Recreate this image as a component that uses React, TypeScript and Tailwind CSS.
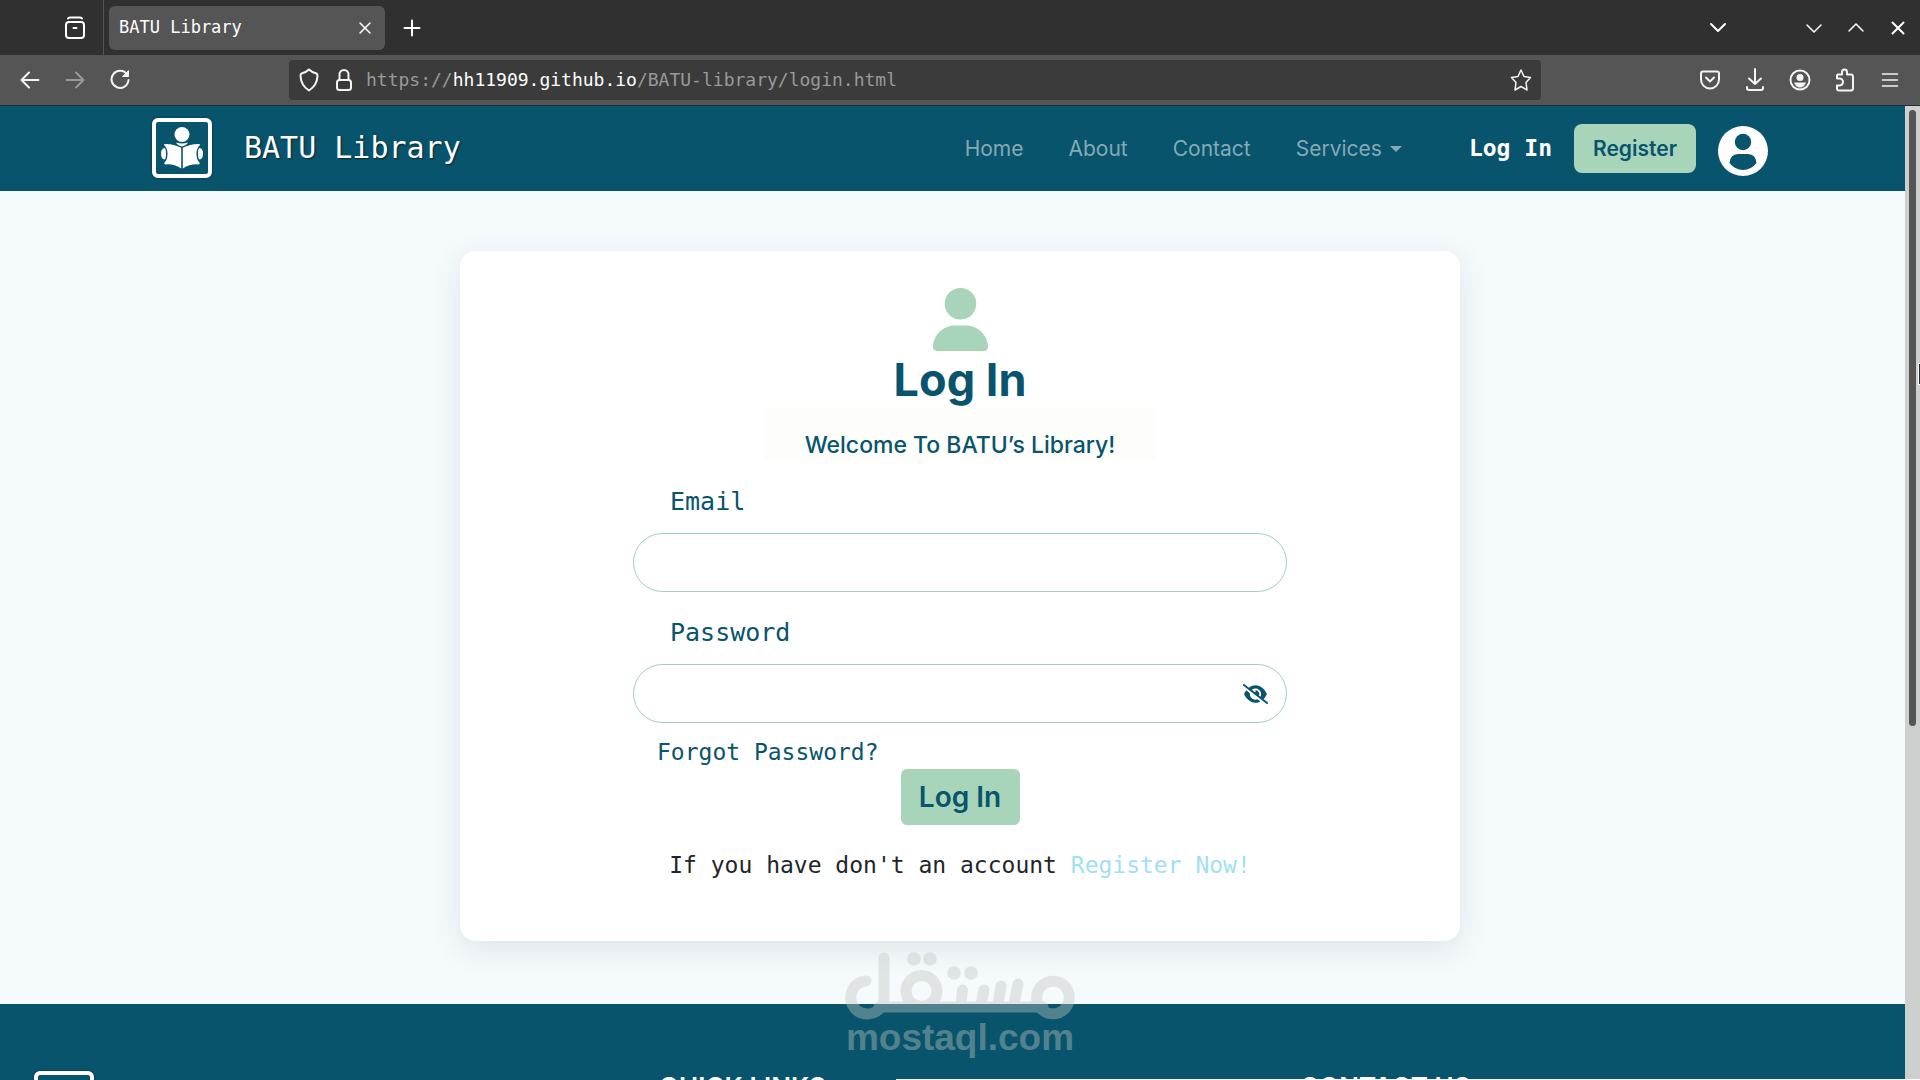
import React, { useState } from 'react';
import { FaEye, FaEyeSlash, FaUser } from 'react-icons/fa6';

const stroke = {
    fill: 'none',
    stroke: 'currentColor',
    strokeLinecap: 'round' as const,
    strokeLinejoin: 'round' as const,
};

interface IconButtonProps {
    label: string;
    className?: string;
    width?: number;
    children: React.ReactNode;
}

const IconButton: React.FC<IconButtonProps> = ({ label, className = '', width = 1.5, children }) => (
    <button type="button" aria-label={label} className={`flex size-6 shrink-0 items-center justify-center ${className}`}>
        <svg viewBox="0 0 24 24" className="size-6" {...stroke} strokeWidth={width}>
            {children}
        </svg>
    </button>
);

const TabBar: React.FC = () => (
    <div className="flex h-[55px] items-center bg-[#303030] pr-2.5 text-white">
        <div className="flex h-full w-[104px] items-center justify-end border-r border-[#555] pr-4">
            <IconButton label="Recent browsing" width={2}>
                <path d="M5 2.5 Q5.5 1.5 7 1.5 H17 Q18.5 1.5 19 2.5" />
                <rect x="3" y="6" width="18" height="16" rx="3" />
                <path d="M10.5 12 H13.5" />
            </IconButton>
        </div>
        <div className="ml-[5px] flex h-11 w-[276px] items-center justify-between rounded-md bg-[#555] pl-2.5 pr-2">
            <span className="font-['DejaVu_Sans_Mono',monospace] text-[17px]">BATU Library</span>
            <IconButton label="Close tab">
                <path d="M7 7 L17 17 M17 7 L7 17" />
            </IconButton>
        </div>
        <IconButton label="New tab" className="ml-[15px]" width={2}>
            <path d="M12 4.5 V19.5 M4.5 12 H19.5" />
        </IconButton>
        <IconButton label="List all tabs" className="ml-auto mr-[72px]" width={2}>
            <path d="M5 8 L12 15 L19 8" />
        </IconButton>
        <div className="flex gap-[18px]">
            <IconButton label="Minimize">
                <path d="M5 9 L12 16 L19 9" />
            </IconButton>
            <IconButton label="Maximize">
                <path d="M5 15 L12 8 L19 15" />
            </IconButton>
            <IconButton label="Close window" width={2}>
                <path d="M6.5 6.5 L17.5 17.5 M17.5 6.5 L6.5 17.5" />
            </IconButton>
        </div>
    </div>
);

const Toolbar: React.FC = () => (
    <div className="flex h-[51px] items-center border-b border-[#1d2f38] bg-[#555] px-[18px] text-[#f4f4f4]">
        <div className="flex w-[271px] gap-[21px]">
            <IconButton label="Back" width={2}>
                <path d="M20.5 12 H3.5 M11 4.5 L3.5 12 L11 19.5" />
            </IconButton>
            <IconButton label="Forward" className="text-[#999]" width={2}>
                <path d="M3.5 12 H20.5 M13 4.5 L20.5 12 L13 19.5" />
            </IconButton>
            <IconButton label="Reload" width={2}>
                <path d="M19 6.5 A8.5 8.5 0 1 0 20.5 12" />
                <path d="M20.5 3 V8.5 H15 Z" fill="currentColor" strokeWidth="1" />
            </IconButton>
        </div>
        <div className="flex h-10 w-[1252px] items-center rounded bg-[#3b3b3b] px-2">
            <IconButton label="Tracking protection" width={2}>
                <path d="M12 1.5 Q15 4.5 19.5 5.5 Q20.5 6 20.5 8 Q20 17.5 12 22.5 Q4 17.5 3.5 8 Q3.5 6 4.5 5.5 Q9 4.5 12 1.5 Z" />
            </IconButton>
            <IconButton label="Site security" className="ml-[11px]" width={2}>
                <path d="M7.5 12 V6.5 A4.5 4.5 0 0 1 16.5 6.5 V12" />
                <rect x="5" y="12" width="14" height="10" rx="2.5" />
            </IconButton>
            <p className="ml-2.5 font-['DejaVu_Sans_Mono',monospace] text-lg text-[#999]">
                https://<span className="text-white">hh11909.github.io</span>/BATU-library/login.html
            </p>
            <IconButton label="Bookmark this page" className="ml-auto">
                <path d="M12 2 L15 8.5 L21.5 9.5 L17 14.5 L18 22 L12 18.5 L6 22 L7 14.5 L2.5 9.5 L9 8.5 Z" />
            </IconButton>
        </div>
        <div className="ml-auto flex gap-[21px]">
            <IconButton label="Save to Pocket" width={2}>
                <path d="M5 3.5 H19 Q21 3.5 21 5.5 V11.5 A9 9 0 0 1 3 11.5 V5.5 Q3 3.5 5 3.5 Z" />
                <path d="M8 9.5 L12 13.5 L16 9.5" />
            </IconButton>
            <IconButton label="Downloads" width={2}>
                <path d="M12 1 V16 M6 10.5 L12 16 L18 10.5 M4 19 V20 Q4 22 6 22 H18 Q20 22 20 20 V19" />
            </IconButton>
            <IconButton label="Account" width={2}>
                <circle cx="12" cy="12" r="9.5" />
                <circle cx="12" cy="9.5" r="3.5" fill="currentColor" stroke="none" />
                <path d="M6 14.5 H18 Q16 19.5 12 19.5 Q8 19.5 6 14.5 Z" fill="currentColor" stroke="none" />
            </IconButton>
            <IconButton label="Extensions" width={2}>
                <path d="M4 10.5 V7.5 Q4 6.5 5 6.5 H9 V4 A2.5 2.5 0 0 1 14 4 V6.5 H18 Q20 6.5 20 8.5 V20.5 Q20 22.5 18 22.5 H6 Q4 22.5 4 20.5 V17.5 H6.5 A3.5 3.5 0 0 0 6.5 10.5 Z" />
            </IconButton>
            <IconButton label="Open menu">
                <path d="M4.5 6 H19.5 M4.5 12 H19.5 M4.5 18 H19.5" />
            </IconButton>
        </div>
    </div>
);

const Logo: React.FC = () => (
    <span className="block size-[60px] shrink-0 rounded-md border-4 border-white text-white shadow-[0_0_3px_#0006]">
        <svg viewBox="0 0 52 52" className="size-full" fill="currentColor">
            <circle cx="26" cy="12.5" r="7.5" />
            <path d="M20 20.5 Q26 22.5 32 20.5 Q31 23 26 24.5 Q21 23 20 20.5 Z" />
            <path d="M8 23 Q8 21.5 10 22 Q18 22 25.2 25.8 V46.5 Q17 41.5 9.5 42.5 Q7.5 42 8.5 40.5 Q11.5 38 11.5 31.5 Q11.5 26 8 23 Z" />
            <path d="M44 23 Q44 21.5 42 22 Q34 22 26.8 25.8 V46.5 Q35 41.5 42.5 42.5 Q44.5 42 43.5 40.5 Q40.5 38 40.5 31.5 Q40.5 26 44 23 Z" />
            <path d="M8.5 26 Q5 26.5 5 31.5 Q5 37 8.5 37.5 Q10 37 10 31.5 Q10 26.5 8.5 26 Z" />
            <path d="M43.5 26 Q47 26.5 47 31.5 Q47 37 43.5 37.5 Q42 37 42 31.5 Q42 26.5 43.5 26 Z" />
        </svg>
    </span>
);

const links = ['Home', 'About', 'Contact'];

const Navbar: React.FC = () => (
    <header className="flex h-[85px] items-center bg-[#08546c] pl-[152px] pr-[137px]">
        <a href="#" className="flex items-center gap-8 pb-0.5 font-['DejaVu_Sans_Mono',monospace] text-3xl text-white text-shadow-[1px_1px_2px_#0008]">
            <Logo />
            BATU Library
        </a>
        <nav className="ml-auto flex gap-[45px] font-[Inter,sans-serif] text-[21px] text-[#84aab6]">
            {links.map((link) => (
                <a key={link} href="#">{link}</a>
            ))}
            <button type="button" className="flex items-center gap-2">
                Services
                <span className="border-x-[6px] border-t-[6px] border-x-transparent border-t-current"></span>
            </button>
        </nav>
        <a href="#" className="ml-[67px] font-['DejaVu_Sans_Mono',monospace] text-[23px] font-bold text-white">Log In</a>
        <a href="#" className="ml-[22px] flex h-[49px] w-[122px] items-center justify-center rounded-lg bg-[#a8d5ba] font-[Inter,sans-serif] text-[21px] font-semibold text-[#08546c]">
            Register
        </a>
        <a href="#" aria-label="Profile" className="ml-[22px] pt-1">
            <svg viewBox="0 0 50 50" className="size-[50px]">
                <circle cx="25" cy="25" r="25" fill="#fff" />
                <circle cx="25" cy="16" r="8.2" fill="#08546c" />
                <path d="M20 28 H30 Q38 28.5 38.5 37 Q33 44 25 44 Q17 44 11.5 37 Q12 28.5 20 28 Z" fill="#08546c" />
            </svg>
        </a>
    </header>
);

const labelClass = "mt-[25px] self-start pl-[37px] font-['DejaVu_Sans_Mono',monospace] text-[25px] leading-8";
const inputClass = 'h-[59px] w-full rounded-full border border-[#a3cdb9] bg-white px-9 text-xl text-[#08546c] outline-none';

const LoginCard: React.FC = () => {
    const [email, setEmail] = useState('');
    const [password, setPassword] = useState('');
    const [showPassword, setShowPassword] = useState(false);

    return (
        <section className="w-full max-w-[1000px] rounded-2xl bg-white pb-[62px] pt-[37px] text-[#08546c] shadow-[0_8px_32px_rgba(0,40,40,0.1)]">
            <form className="mx-auto flex max-w-[654px] flex-col items-center" onSubmit={(e) => e.preventDefault()}>
                <FaUser className="size-[63px] text-[#a8d5ba]" />
                <h1 className="font-[Inter,sans-serif] text-[45px] font-bold leading-[57px]">Log In</h1>
                <p className="flex h-[53px] w-[392px] items-center justify-center rounded bg-[#fdfdfc] pt-[22px] font-[Inter,sans-serif] text-[23px] font-medium">
                    Welcome To BATU’s Library!
                </p>
                <label htmlFor="email" className={labelClass}>Email</label>
                <input id="email" type="email" value={email} onChange={(e) => setEmail(e.target.value)} className={`mt-[15px] ${inputClass}`} />
                <label htmlFor="password" className={labelClass}>Password</label>
                <div className="relative mt-[15px] w-full">
                    <input
                        id="password"
                        type={showPassword ? 'text' : 'password'}
                        value={password}
                        onChange={(e) => setPassword(e.target.value)}
                        className={inputClass}
                    />
                    <button
                        type="button"
                        aria-label="Show password"
                        onClick={() => setShowPassword(!showPassword)}
                        className="absolute inset-y-0 right-[19px] flex items-center"
                    >
                        {showPassword ? <FaEye className="h-5 w-[25px]" /> : <FaEyeSlash className="h-5 w-[25px]" />}
                    </button>
                </div>
                <a href="#" className="mt-[15px] self-start pl-6 font-['DejaVu_Sans_Mono',monospace] text-[23px] leading-7">Forgot Password?</a>
                <button type="submit" className="mt-[3px] h-14 w-[119px] rounded-md bg-[#a8d5ba] font-[Inter,sans-serif] text-[28px] font-semibold">Log In</button>
                <p className="mt-[26px] whitespace-nowrap font-['DejaVu_Sans_Mono',monospace] text-[23px] leading-7 text-[#212529]">
                    If you have don't an account <a href="#" className="text-[#a2dff3]">Register Now!</a>
                </p>
            </form>
        </section>
    );
};

const Footer: React.FC = () => (
    <footer className="flex min-h-0 flex-1 items-start overflow-hidden bg-[#08546c] pl-[34px] pt-[67px] font-[Inter,sans-serif] text-[26px] font-semibold leading-8 text-white">
        <div className="w-[625px] shrink-0">
            <Logo />
        </div>
        <h2 className="w-[641px] shrink-0">QUICK LINKS</h2>
        <h2>CONTACT US</h2>
        <div className="absolute bottom-0 left-[896px] right-0 h-px bg-white"></div>
    </footer>
);

const Watermark: React.FC = () => (
    <div className="pointer-events-none absolute bottom-6 left-1/2 w-[230px] -translate-x-1/2 text-[#c1c8c1] opacity-40">
        <svg viewBox="0 0 230 68" className="w-full" fill="none" stroke="currentColor" strokeWidth="11" strokeLinecap="round">
            <path d="M21 29 A16.5 16.5 0 1 0 37 53 Q39 50 39 45 V6 M34 55 H198" />
            <circle cx="76.5" cy="39" r="15.5" />
            <circle cx="208" cy="45.5" r="16.3" />
            <path d="M117.5 38 L116 52 M139 38 L136 52 M156 34 L153 52 M173 32 L169 52" />
            <g fill="currentColor" stroke="none">
                <circle cx="69" cy="7" r="6.8" />
                <circle cx="85" cy="7" r="6.8" />
                <circle cx="109" cy="21" r="6.8" />
                <circle cx="126" cy="21" r="6.8" />
            </g>
        </svg>
        <p className="whitespace-nowrap text-center font-['Liberation_Sans',sans-serif] text-[37px] font-bold leading-9">mostaql.com</p>
    </div>
);

export default function App() {
    return (
        <div className="relative flex h-screen flex-col overflow-hidden">
            <TabBar />
            <Toolbar />
            <div className="flex min-h-0 flex-1">
                <div className="flex min-w-0 flex-1 flex-col overflow-hidden">
                    <Navbar />
                    <main className="flex justify-center bg-[#f5fafd] pb-[63px] pl-[15px] pt-[60px]">
                        <LoginCard />
                    </main>
                    <Footer />
                </div>
                <div className="w-[15px] bg-[#cdd0cf] pl-1 pt-1">
                    <div className="h-[616px] w-[7px] rounded-full bg-[#555]"></div>
                </div>
            </div>
            <Watermark />
            {/* mouse pointer at the window edge */}
            <div className="absolute right-0 top-[363px] h-[22px] w-0.5 border-y border-l border-white bg-[#1d2f38]"></div>
        </div>
    );
}
